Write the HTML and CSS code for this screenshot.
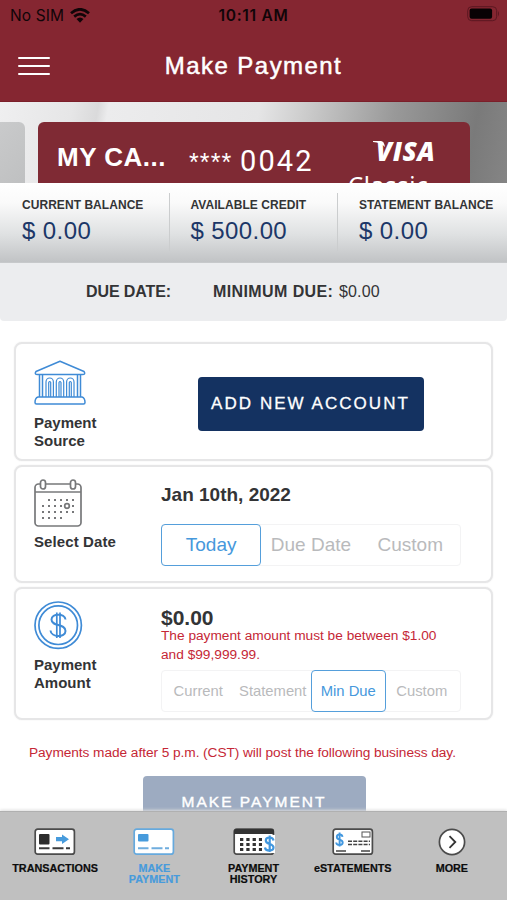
FILE: index.html
```html
<!DOCTYPE html>
<html lang="en">
<head>
<meta charset="utf-8">
<title>Make Payment</title>
<link rel="stylesheet" href="styles.css">
</head>
<body>
<div class="app">
  <header class="header">
    <div class="status">
      <div class="carrier"><span>No SIM</span>
        <svg width="20" height="15" viewBox="0 0 20 15" fill="none" stroke="#100508" stroke-width="2.7"><path d="M1 5.2Q10-2.6 19 5.2M4.2 8.6Q10 3.8 15.8 8.6"/><path d="M6.5 11.1Q10 8.1 13.5 11.1L10 14.7Z" fill="#100508" stroke="none"/></svg>
      </div>
      <div class="clock">10:11 AM</div>
      <div class="battery"><svg width="33" height="16" viewBox="0 0 33 16"><rect x=".7" y=".7" width="29" height="14" rx="4" fill="none" stroke="#5b1721"/><rect x="2.6" y="2.6" width="22.5" height="10.2" rx="2" fill="#080204"/><path d="M31 5q2 2.7 0 5.5z" fill="#5b1721"/></svg></div>
    </div>
    <div class="nav">
      <div class="burger"><i></i><i></i><i></i></div>
      <h1>Make Payment</h1>
    </div>
  </header>

  <section class="hero">
    <div class="prev-card"></div>
    <div class="credit-card">
      <div class="card-name">MY CA...</div>
      <div class="stars">****</div>
      <div class="digits">0042</div>
      <div class="brand">
        <div class="visa"><svg width="12" height="6" viewBox="0 0 12 6"><path d="M0 0H8Q11 0 12 6Q8 1.5 0 .9Z" fill="#fff"/></svg>VISA</div>
        <div class="tier">Classic</div>
      </div>
    </div>
  </section>

  <section class="balances">
    <div class="balance"><b>CURRENT BALANCE</b><span>$ 0.00</span></div>
    <div class="balance"><b>AVAILABLE CREDIT</b><span>$ 500.00</span></div>
    <div class="balance"><b>STATEMENT BALANCE</b><span>$ 0.00</span></div>
  </section>

  <section class="due"><b class="due-date">DUE DATE:</b><b class="min-due">MINIMUM DUE:</b><span>$0.00</span></section>

  <main class="cards">
    <section class="panel source">
      <div class="side">
        <svg width="52" height="45" viewBox="0 0 52 45" fill="none" stroke="#3f8bd6" stroke-width="1.5" stroke-linejoin="round"><path d="M26 1.2 50 11.5Q52 14.5 48.5 14.5H3.5Q0 14.5 2 11.5ZM5.500 14.5V37M8.5 14.5V37M43.500 14.5V37M46.500 14.5V37M4 37H48Q51 38 51 42.500Q51 44 49.500 44H2.500Q1 44 1 42.500Q1 38 4 37Z"/><path d="M12 37V22a3.700 4 0 0 1 7.400 0V37M14.700 37V22.500q1-2 2 0V37M22.300 37V22a3.700 4 0 0 1 7.400 0V37M25 37V22.500q1-2 2 0V37M32.600 37V22a3.700 4 0 0 1 7.400 0V37M35.300 37V22.500q1-2 2 0V37" stroke-width="1.200"/></svg>
        <div class="label">Payment<br>Source</div>
      </div>
      <div class="content"><button class="add">ADD NEW ACCOUNT</button></div>
    </section>

    <section class="panel date">
      <div class="side">
        <svg width="48" height="48" viewBox="0 0 48 48" fill="none" stroke="#77787a" stroke-width="1.700"><rect x="1" y="5" width="46" height="42" rx="3.500"/><path d="M1 13H47"/><rect x="6.500" y="1" width="5" height="9" rx="2.500" fill="#fff"/><rect x="36.500" y="1" width="5" height="9" rx="2.500" fill="#fff"/><path d="M14 21h26M8 27h32M8 33h32M8 39h20" stroke-width="2" stroke-dasharray="2 4"/><circle cx="33" cy="27" r="2.300" fill="#fff"/></svg>
        <div class="label">Select Date</div>
      </div>
      <div class="content">
        <div class="date-value">Jan 10th, 2022</div>
        <div class="segments three"><span class="on">Today</span><span>Due Date</span><span>Custom</span></div>
      </div>
    </section>

    <section class="panel amount">
      <div class="side">
        <svg width="49" height="49" viewBox="0 0 49 49" fill="none" stroke="#3f8bd6" stroke-width="1.700"><circle cx="24.200" cy="24.200" r="23.200"/><circle cx="24.200" cy="24.200" r="19.300"/><path d="M31.500 18.500C31 12 17.500 12 17.500 18.500C17.500 26 31.500 22 31.500 30C31.500 37 17 36.500 16.500 29.500" stroke-width="2"/><path d="M22.800 11.500V37M26 11.500V37"/></svg>
        <div class="label">Payment<br>Amount</div>
      </div>
      <div class="content">
        <div class="amount-value">$0.00</div>
        <div class="error">The payment amount must be between $1.00<br>and $99,999.99.</div>
        <div class="segments four"><span>Current</span><span>Statement</span><span class="on">Min Due</span><span>Custom</span></div>
      </div>
    </section>
  </main>

  <p class="notice">Payments made after 5 p.m. (CST) will post the following business day.</p>
  <div class="submit-wrap"><button class="submit">MAKE PAYMENT</button></div>

  <nav class="tabs">
    <div class="tab"><svg width="42" height="28" viewBox="0 0 42 28"><rect x="1.200" y="1.200" width="39.200" height="25" rx="2.500" fill="#fff" stroke="#4b4b4b" stroke-width="1.700"/><rect x="5" y="6" width="10.500" height="10.500" rx="1" fill="#2d2d2d"/><path d="M22 9h6V6.500L35 11.200 28 16v-2.700h-6z" fill="#479bdc"/><path d="M5 20.300h10.500M18.500 20.300h11M32 20.300h4" stroke="#3b3b3b" stroke-width="2"/></svg><span>TRANSACTIONS</span></div>
    <div class="tab active"><svg width="42" height="28" viewBox="0 0 42 28"><rect x="1.200" y="1.200" width="39.200" height="25" rx="2.500" fill="#fff" stroke="#66a9dd" stroke-width="1.700"/><rect x="5" y="6" width="10.500" height="7.500" rx="1" fill="#479bdc"/><path d="M5 20.300h10.500M18.500 20.300h11M32 20.300h4" stroke="#6fadde" stroke-width="2"/></svg><span>MAKE<br>PAYMENT</span></div>
    <div class="tab"><svg width="42" height="28" viewBox="0 0 42 28"><rect x="1.200" y="1.200" width="39.200" height="25" rx="2.500" fill="#fff" stroke="#4b4b4b" stroke-width="1.700"/><path d="M1 6V3Q1 1 3 1H39Q41 1 41 3V6Z" fill="#333"/><path d="M7 11.500h22M7 16.500h22M7 21.500h22" stroke="#333" stroke-width="3" stroke-dasharray="3.300 3"/><path d="M31 7h11v18H31z" fill="#fff"/><path d="M40.500 12.500C40 8.500 32.800 8.500 32.800 12.500C32.800 17 40.500 15 40.500 19.500C40.500 23.500 32.500 23.500 32 19.500M36.700 7.500V24" fill="none" stroke="#4197df" stroke-width="2.200"/></svg><span>PAYMENT<br>HISTORY</span></div>
    <div class="tab"><svg width="42" height="28" viewBox="0 0 42 28"><rect x="1.200" y="1.200" width="39.200" height="25" rx="2.500" fill="#fff" stroke="#4b4b4b" stroke-width="1.700"/><path d="M10.500 8.800C10 5.500 4.800 5.500 4.800 9C4.800 12.500 10.700 11 10.700 14.500C10.700 17.800 4.500 17.800 4.200 14.500M7.600 4.500V18.500" fill="none" stroke="#4197df" stroke-width="1.900"/><rect x="30" y="4" width="8" height="5" fill="none" stroke="#555"/><path d="M16 13.300h22M16 16.500h22" stroke="#444" stroke-width="1.500" stroke-dasharray="4 1.200"/><path d="M4 23h10M29 23h9" stroke="#444" stroke-width="1.500"/></svg><span>eSTATEMENTS</span></div>
    <div class="tab"><svg width="28" height="28" viewBox="0 0 28 28" fill="none"><circle cx="14" cy="14" r="12.600" fill="#fff" stroke="#4b4b4b" stroke-width="1.700"/><path d="M11.500 8.200 17.300 14l-5.800 5.800" stroke="#333" stroke-width="1.800"/></svg><span>MORE</span></div>
  </nav>
</div>
</body>
</html>
```
FILE: styles.css
```css
* { box-sizing: border-box; }
body { margin: 0; font-family: "Liberation Sans", Arial, sans-serif; background: #fff; color: #333436; }
svg { display: block; flex: none; }
button { border: 0; padding: 0; font-family: inherit; color: #fff; white-space: nowrap; }

.app { width: 507px; height: 900px; overflow: hidden; display: flex; flex-direction: column; }
.app > * { flex: none; }

.header { height: 102px; background: #852631; border-bottom: 1px solid #7b1f2a; }
.status { height: 30px; display: grid; grid-template-columns: 1fr auto 1fr; align-items: center; padding: 0 7px 0 10px; color: #100508; font-family: Inter, sans-serif; }
.carrier { display: flex; align-items: center; gap: 6px; font-size: 15.500px; letter-spacing: .1px; }
.clock { font-size: 15.500px; font-weight: 600; letter-spacing: .7px; margin-left: -3px; }
.battery { display: flex; justify-content: flex-end; margin-top: -2px; }
.nav { height: 71px; display: grid; grid-template-columns: 32px 1fr 32px; align-items: center; padding: 0 18px; }
.burger { display: flex; flex-direction: column; gap: 6px; }
.burger i { height: 2px; border-radius: 1px; background: #fff; }
h1 { margin: 0; text-align: center; font-size: 24px; font-weight: 400; letter-spacing: 1.450px; color: #fff; -webkit-text-stroke: .5px #fff; }

.hero { height: 81px; display: flex; gap: 13px; padding-top: 20px; overflow: hidden; background: linear-gradient(100deg, #efeff0 0%, #e6e6e7 14%, #dadadb 19%, #ececed 21%, #e5e5e6 50%, #cfcfcf 58%, #999 76%, #7a7a7a 92%, #858585 100%); }
.prev-card { width: 25px; border-radius: 0 6px 0 0; background: linear-gradient(135deg, #c9cacb, #bfc0c1); }
.credit-card { width: 432px; height: 90px; border-radius: 6px 6px 0 0; background: #7f2a34; color: #fff; display: flex; padding-left: 19px; }
.card-name { width: 132px; padding-top: 20px; font-size: 26px; line-height: 30px; font-weight: 700; letter-spacing: .5px; }
.stars { width: 51px; padding-top: 25px; font-size: 25px; line-height: 30px; letter-spacing: 1.100px; }
.digits { width: 108px; padding-top: 23px; font-family: Roboto, sans-serif; font-size: 29px; line-height: 32px; letter-spacing: 2.100px; }
.brand { flex: 1; }
.visa { display: flex; height: 30px; margin: 14px 0 0 25px; font: italic 800 26px/30px "Open Sans", sans-serif; letter-spacing: .6px; }
.visa svg { margin: 5px -9px 0 0; }
.tier { padding-top: 4px; font: 24px/30px "Noto Sans", sans-serif; letter-spacing: .7px; }

.balances { height: 80px; display: grid; grid-template-columns: 168.500px 168.500px 170px; padding-top: 10px; background: linear-gradient(#fff 0%, #fafafa 25%, #dfe1e2 65%, #c1c3c5 100%); border-bottom: 1px solid #c7c9cb; }
.balance { height: 58px; padding: 5px 0 0 22px; white-space: nowrap; }
.balance + .balance { border-left: 1px solid #cbcdce; padding-left: 21px; }
.balance b { display: block; font-size: 12px; line-height: 14px; letter-spacing: .05px; }
.balance span { display: block; margin-top: 5px; font-size: 24px; line-height: 28px; letter-spacing: .4px; color: #1c3768; }

.due { height: 58px; display: flex; align-items: center; padding-left: 86px; background: #ecedef; border-radius: 0 0 4px 4px; font-size: 16px; }
.due-date { width: 127px; letter-spacing: -.1px; }
.min-due { width: 126px; letter-spacing: .4px; white-space: nowrap; }
.due span { letter-spacing: .15px; }

.cards { display: flex; flex-direction: column; gap: 4px; margin: 21px 14px 0; }
.panel { display: flex; height: 118.500px; border: 2px solid #e6e6e7; border-radius: 8px; background: #fff; box-shadow: 0 0 2px #eee; }
.panel.amount { height: 133px; }
.side { width: 145px; padding-left: 18px; }
.source .side { padding-top: 16px; }
.date .side, .amount .side { padding-top: 12px; }
.label { font-size: 15px; line-height: 17.500px; font-weight: 700; margin-top: 6px; white-space: nowrap; }
.source .label { margin-top: 9px; }
.date .label { margin-top: 6px; letter-spacing: .1px; }
.content { width: 300px; }
.add { display: block; width: 226px; height: 54px; margin: 33px 0 0 36.500px; border-radius: 4px; background: #143261; font-size: 17px; letter-spacing: 2.050px; -webkit-text-stroke: .3px #fff; }
.date-value { padding-top: 17px; font-size: 19px; line-height: 22px; font-weight: 700; }
.segments { display: flex; width: 300px; border: 1px solid #f3f3f4; border-radius: 4px; color: #b9babc; white-space: nowrap; }
.segments span { display: flex; justify-content: center; align-items: center; }
.segments .on { color: #4698dc; border: 1.500px solid #559fdb; border-radius: 4px; margin: -1px 0; }
.three { height: 42px; margin-top: 18px; font-size: 19px; }
.three span { width: 99.300px; }
.three .on { margin-left: -1px; width: 100.300px; }
.four { height: 42px; margin-top: 6px; font-size: 14.800px; }
.four span { width: 74.500px; }
.four span:not(.on) { position: relative; left: -1px; }
.amount-value { padding-top: 17px; font-size: 21px; line-height: 24px; font-weight: 700; }
.error { font-size: 13.700px; line-height: 18.500px; color: #c52736; white-space: nowrap; margin-top: -3px; }

.notice { margin: 24px 0 0 29px; font-size: 13.700px; line-height: 17px; letter-spacing: -.06px; color: #c52736; white-space: nowrap; }
.submit-wrap { height: 51px; padding: 15px 0 0 142.500px; overflow: hidden; }
.submit { width: 223px; height: 52px; border-radius: 4px; background: #9dabc1; font-size: 15.500px; letter-spacing: 2px; -webkit-text-stroke: .4px #fff; }

.tabs { height: 89px; display: grid; grid-template-columns: repeat(5, 99.200px); justify-content: center; padding: 16px 0 0; background: #c0c0c0; border-top: 1px solid #b0b0b0; box-shadow: 0 -1px 3px #ddd; position: relative; margin-top: -1px; }
.tab { display: flex; flex-direction: column; align-items: center; text-align: center; color: #0c0c0c; font-size: 10.800px; line-height: 11px; font-weight: 700; -webkit-text-stroke: .2px; }
.tab span { margin-top: 7px; }
.active { color: #479bdc; }
```
